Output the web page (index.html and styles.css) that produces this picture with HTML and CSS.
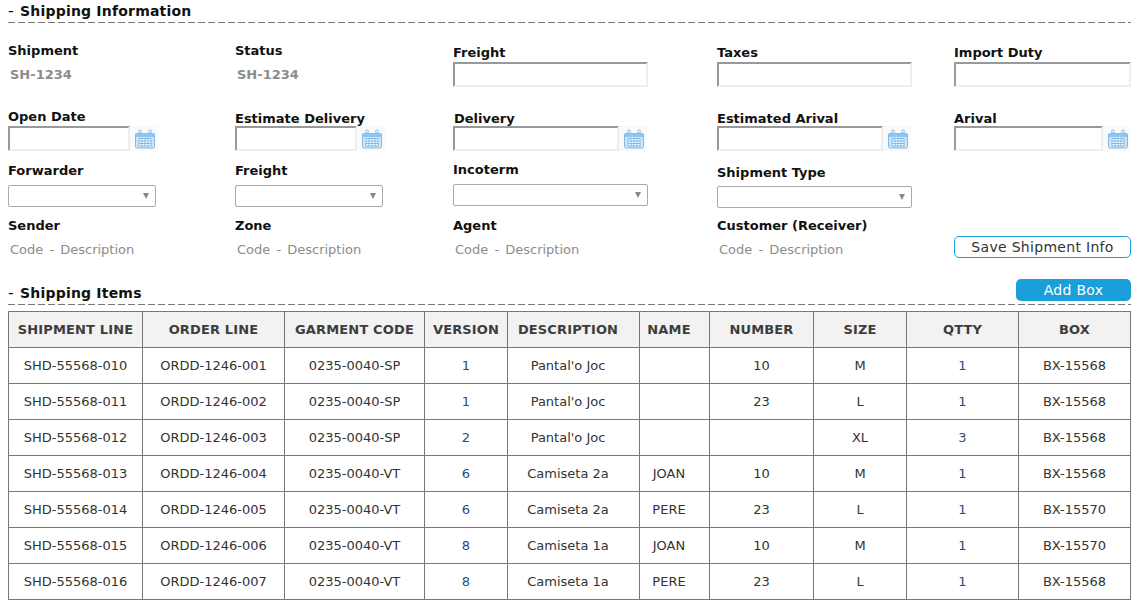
FILE: index.html
```html
<!DOCTYPE html>
<html lang="en">
<head>
    <meta charset="UTF-8">
    <meta name="viewport" content="width=device-width, initial-scale=1.0">
    <title>Shipping Information</title>
    <link rel="stylesheet" href="styles.css">
</head>
<body>

<svg class="defs" width="0" height="0">
    <symbol id="cal" viewBox="0 0 20 20">
        <path d="M1.5 4.5h17a1 1 0 0 1 1 1v12a1.500 1.500 0 0 1-1.500 1.500h-16a1.500 1.500 0 0 1-1.500-1.500v-12a1 1 0 0 1 1-1z" fill="#cfe5f7" stroke="#7db9e8"/>
        <path d="M1 4.500h18v3.500h-18z" fill="#8fc4ee"/>
        <path d="M4 9.500h12v7.500h-12zM4 12h12M4 14.500h12M7 9.500v7.500M10 9.500v7.500M13 9.500v7.500" fill="#fff" stroke="#7db9e8" stroke-width="1"/>
        <circle cx="5" cy="2.500" r="1.500" fill="#fff" stroke="#7db9e8"/>
        <circle cx="15" cy="2.500" r="1.500" fill="#fff" stroke="#7db9e8"/>
    </symbol>
</svg>

<h2 class="section-title first"><span class="dash">-</span>Shipping Information</h2>

<div class="form-row row-1">
    <div class="field"><label class="up2">Shipment</label><span class="value strong">SH-1234</span></div>
    <div class="field"><label class="up2">Status</label><span class="value strong">SH-1234</span></div>
    <div class="field"><label>Freight</label><input type="text" class="wide"></div>
    <div class="field"><label>Taxes</label><input type="text" class="wide"></div>
    <div class="field"><label>Import Duty</label><input type="text" class="wider"></div>
</div>

<div class="form-row row-2">
    <div class="field"><label class="up2">Open Date</label><div class="date"><input type="text"><span class="cal"><svg width="20" height="20"><use href="#cal"/></svg></span></div></div>
    <div class="field"><label>Estimate Delivery</label><div class="date"><input type="text"><span class="cal"><svg width="20" height="20"><use href="#cal"/></svg></span></div></div>
    <div class="field"><label class="nudge">Delivery</label><div class="date"><input type="text" class="mid"><span class="cal"><svg width="20" height="20"><use href="#cal"/></svg></span></div></div>
    <div class="field"><label>Estimated Arival</label><div class="date"><input type="text" class="mid"><span class="cal"><svg width="20" height="20"><use href="#cal"/></svg></span></div></div>
    <div class="field"><label>Arival</label><div class="date"><input type="text" class="long"><span class="cal"><svg width="20" height="20"><use href="#cal"/></svg></span></div></div>
</div>

<div class="form-row row-3">
    <div class="field"><label>Forwarder</label><div class="select"></div></div>
    <div class="field"><label>Freight</label><div class="select"></div></div>
    <div class="field raise"><label>Incoterm</label><div class="select large"></div></div>
    <div class="field"><label class="low">Shipment Type</label><div class="select large"></div></div>
</div>

<div class="form-row row-4">
    <div class="field"><label>Sender</label><span class="value">Code - Description</span></div>
    <div class="field"><label>Zone</label><span class="value">Code - Description</span></div>
    <div class="field"><label>Agent</label><span class="value">Code - Description</span></div>
    <div class="field"><label>Customer (Receiver)</label><span class="value">Code - Description</span></div>
    <div class="field"><button type="button" class="btn-outline">Save Shipment Info</button></div>
</div>

<div class="items-head">
    <h2 class="section-title"><span class="dash">-</span>Shipping Items</h2>
    <button type="button" class="btn-solid">Add Box</button>
</div>

<table class="items">
    <thead>
        <tr>
            <th class="c1">SHIPMENT LINE</th><th class="c2">ORDER LINE</th><th class="c3">GARMENT CODE</th><th class="c4">VERSION</th><th class="c5 shift">DESCRIPTION</th><th class="c6 shift">NAME</th><th class="c7">NUMBER</th><th class="c8">SIZE</th><th class="c9">QTTY</th><th>BOX</th>
        </tr>
    </thead>
    <tbody>
        <tr><td>SHD-55568-010</td><td>ORDD-1246-001</td><td>0235-0040-SP</td><td class="num">1</td><td class="shift">Pantal'o Joc</td><td class="shift"></td><td>10</td><td>M</td><td class="num">1</td><td>BX-15568</td></tr>
        <tr><td>SHD-55568-011</td><td>ORDD-1246-002</td><td>0235-0040-SP</td><td class="num">1</td><td class="shift">Pantal'o Joc</td><td class="shift"></td><td>23</td><td>L</td><td class="num">1</td><td>BX-15568</td></tr>
        <tr><td>SHD-55568-012</td><td>ORDD-1246-003</td><td>0235-0040-SP</td><td class="num">2</td><td class="shift">Pantal'o Joc</td><td class="shift"></td><td></td><td>XL</td><td class="num">3</td><td>BX-15568</td></tr>
        <tr><td>SHD-55568-013</td><td>ORDD-1246-004</td><td>0235-0040-VT</td><td class="num">6</td><td class="shift">Camiseta 2a</td><td class="shift">JOAN</td><td>10</td><td>M</td><td class="num">1</td><td>BX-15568</td></tr>
        <tr><td>SHD-55568-014</td><td>ORDD-1246-005</td><td>0235-0040-VT</td><td class="num">6</td><td class="shift">Camiseta 2a</td><td class="shift">PERE</td><td>23</td><td>L</td><td class="num">1</td><td>BX-15570</td></tr>
        <tr><td>SHD-55568-015</td><td>ORDD-1246-006</td><td>0235-0040-VT</td><td class="num">8</td><td class="shift">Camiseta 1a</td><td class="shift">JOAN</td><td>10</td><td>M</td><td class="num">1</td><td>BX-15570</td></tr>
        <tr><td>SHD-55568-016</td><td>ORDD-1246-007</td><td>0235-0040-VT</td><td class="num">8</td><td class="shift">Camiseta 1a</td><td class="shift">PERE</td><td>23</td><td>L</td><td class="num">1</td><td>BX-15568</td></tr>
    </tbody>
</table>

</body>
</html>
```

FILE: styles.css
```css
body {
    font-family: "DejaVu Sans", Verdana, sans-serif;
    font-size: 13px;
    margin: 0;
    padding: 0 4px 0 8px;
    color: #333;
    background: #fff;
}
.defs {
    position: absolute;
}
.section-title {
    font-size: 14px;
    line-height: 17px;
    font-weight: bold;
    letter-spacing: .2px;
    color: #111;
    margin: 0;
    padding-bottom: 3px;
    background: repeating-linear-gradient(90deg, #777 0 7px, transparent 7px 10px) left bottom / 100% 1px no-repeat;
}
.section-title.first {
    padding-top: 3px;
}
.dash {
    display: inline-block;
    width: 12px;
    font-size: 16px;
    line-height: 16px;
    font-weight: normal;
}
.form-row {
    display: grid;
    grid-template-columns: 227px 218px 264px 237px 177px;
}
.row-1 {
    height: 66px;
    padding-top: 22px;
}
.row-2 {
    height: 52px;
}
.row-3 {
    height: 55px;
}
.row-4 {
    height: 67px;
}
.field {
    display: flex;
    flex-direction: column;
    align-items: flex-start;
}
.field label {
    font-size: 13px;
    line-height: 16px;
    font-weight: bold;
    color: #111;
}
.field label.up2 {
    margin-top: -2px;
    margin-bottom: 2px;
}
.field label.low {
    margin-top: 2px;
    margin-bottom: -1px;
}
.field label.nudge {
    margin-left: 1px;
}
.row-2 label {
    margin-bottom: -1px;
}
.row-2 label.up2 {
    margin-bottom: 1px;
}
.raise {
    margin-top: -1px;
}
.value {
    font-size: 13px;
    line-height: 16px;
    word-spacing: 2px;
    color: #8c8c8c;
    padding: 8px 2px 0;
}
.value.strong {
    font-weight: bold;
    padding-top: 6px;
}
input {
    box-sizing: border-box;
    height: 25px;
    width: 122px;
    border: 2px solid;
    border-color: #999 #eee #eee #999;
    background: #fff;
    padding: 0;
    margin: 0;
}
input.wide {
    width: 195px;
    margin-top: 1px;
}
input.wider {
    width: 177px;
    margin-top: 1px;
}
input.mid {
    width: 166px;
}
input.long {
    width: 149px;
}
.date {
    display: flex;
}
.cal {
    display: flex;
    align-items: center;
    box-sizing: border-box;
    padding-left: 5px;
    width: 28px;
    height: 25px;
    background: #fafafa;
}
.select {
    position: relative;
    box-sizing: border-box;
    width: 148px;
    height: 22px;
    margin-top: 6px;
    background: #fff;
    border: 1px solid #aaa;
    border-radius: 2px;
}
.select.large {
    width: 195px;
}
.select::after {
    content: "";
    position: absolute;
    right: 6px;
    top: 7px;
    border-left: 3px solid transparent;
    border-right: 3px solid transparent;
    border-top: 6px solid #888;
}
button {
    font-family: inherit;
    font-size: 14px;
    letter-spacing: .3px;
    cursor: pointer;
    padding: 0;
    box-sizing: border-box;
    border-radius: 5px;
}
.btn-outline {
    width: 177px;
    height: 22px;
    margin-top: 18px;
    background: #fff;
    color: #333;
    border: 1px solid #1a9fda;
}
.items-head {
    position: relative;
}
.btn-solid {
    position: absolute;
    right: 0;
    top: -6px;
    width: 115px;
    height: 22px;
    background: #1a9fda;
    color: #fff;
    border: none;
}
.items {
    width: 1123px;
    margin-top: 6px;
    border-collapse: collapse;
    table-layout: fixed;
}
.items th, .items td {
    box-sizing: border-box;
    border: 1px solid #777;
    text-align: center;
    height: 36px;
    padding: 0;
}
.items th {
    font-size: 13px;
    font-weight: bold;
    letter-spacing: .15px;
    background: #f2f2f2;
    color: #3d3d3d;
}
.items td {
    font-size: 13px;
    color: #333;
}
.items td.num {
    color: #2f4a78;
}
.items .shift {
    padding-right: 11px;
}
.c1 { width: 134px; }
.c2 { width: 142px; }
.c3 { width: 140px; }
.c4 { width: 83px; }
.c5 { width: 132px; }
.c6 { width: 70px; }
.c7 { width: 104px; }
.c8 { width: 93px; }
.c9 { width: 112px; }
```
